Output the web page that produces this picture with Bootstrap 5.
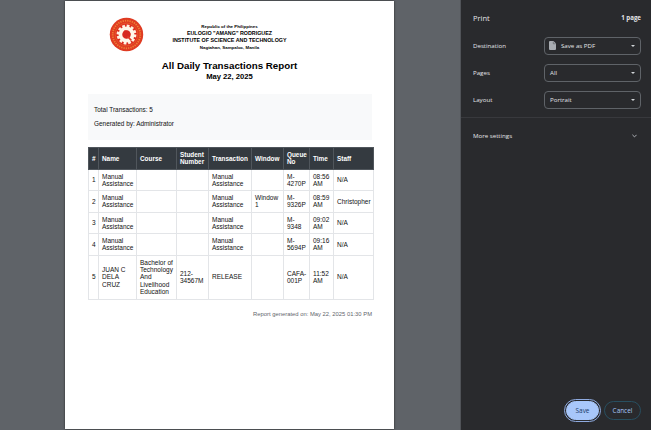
<!DOCTYPE html>
<html lang="en">
<head>
<meta charset="utf-8">
<title>Print</title>
<link href="https://cdn.jsdelivr.net/npm/bootstrap@5.3.0/dist/css/bootstrap.min.css" rel="stylesheet">
<style>
body{width:651px;height:430px;background:#292a2d;font-family:"Open Sans","Noto Sans",sans-serif}
.preview{width:461px;background:#5f6368;padding:1px 0 0 65px;border-right:1px solid #505358}
.sheet{width:329px;height:428px;background:#fff;color:#111;padding:22px 21px 0 23px;font-family:"Liberation Sans",Arial,sans-serif;box-shadow:0 0 2px #222}
.letterhead{height:28px;color:#000;padding-right:2px}
.seal{position:absolute;left:21px;top:-6px;width:35px;height:35px}
.h-sm{font-size:4.4px;line-height:7px}
.h-md{font-size:5.37px;line-height:7px}
.title{font-size:9.75px;line-height:12px;margin-top:9px;color:#000;padding-right:2px}
.date{font-size:7.65px;line-height:10px;color:#000;padding-right:2px}
.summary{height:46px;margin-top:12px;padding:9px 6px;background:#f8f9fa;font-size:6.43px;line-height:14px;width:284px}
.report{width:285px;table-layout:fixed;border-collapse:collapse;margin-top:7px;font-size:6.5px;line-height:7.2px}
.report th,.report td{border:1px solid #e3e5e8;padding:0 0 0 3px;vertical-align:middle;height:21.5px}
.report th{background:#343a40;font-size:6.4px;color:#fff;border-color:#50565c}
.report tr.tall td{height:44px}
.stamp{font-size:5.85px;line-height:8px;margin-top:10px;color:#5f666d;padding-right:1px}
.panel{width:190px;color:#e3e5e8;font-size:6.15px;line-height:10px;padding:13px 10px 0 12px}
.panel-title{font-size:7.5px}
.settings{padding-top:9px}
.setting{height:27px}
.picker{width:97px;height:18px;border:1px solid #5f6368;border-radius:4px;padding:0 5px}
.doc{margin:0 5px 0 -1px}
.caret{width:0;height:0;border:2px solid transparent;border-top-color:#d0d3d7;border-bottom:0}
.rule{height:1px;background:#38393d;margin:4px -10px 0 -12px}
.more{padding-top:13px}
.actions{padding-bottom:10px}
.pill{height:19px;border-radius:10px;font-size:6.4px;line-height:10px;padding:0}
.pill-save,.pill-save:hover{width:33px;margin-right:5px;background:#a8c7fa;color:#173968;border:1px solid #a8c7fa;outline:1px solid #8fabe0;outline-offset:1px}
.pill-cancel,.pill-cancel:hover{width:37px;color:#a8c7fa;border:1px solid #284f60}
</style>
</head>
<body class="d-flex overflow-hidden m-0">
<main class="preview flex-shrink-0">
 <div class="sheet">
  <header class="letterhead position-relative text-center fw-bold">
   <svg class="seal" viewBox="0 0 36 36">
    <circle cx="18" cy="18" r="17.2" fill="#df3b22"/>
    <circle cx="18" cy="18" r="14.2" fill="none" stroke="#ee8034" stroke-width="1.8" stroke-dasharray="1.3 1.1"/>
    <circle cx="18" cy="18" r="11.6" fill="#dc2d1f" stroke="#ee6f2d" stroke-width=".6"/>
    <circle cx="18" cy="18" r="8.8" fill="none" stroke="#fff3df" stroke-width="2.8" stroke-dasharray="2.8 1.8"/>
    <circle cx="18" cy="18" r="6.3" fill="#dc2d1f" stroke="#fff8ea" stroke-width="3.8"/>
    <path d="M16 13.7l4.5.6 1.5 3-1 4-3 .6-3-2.4-.5-3.5z" fill="#d6291f"/>
    <path d="M19 20l4 4" stroke="#df3b22" stroke-width="1.6"/>
   </svg>
   <div class="h-sm">Republic of the Philippines</div>
   <div class="h-md">EULOGIO "AMANG" RODRIGUEZ</div>
   <div class="h-md">INSTITUTE OF SCIENCE AND TECHNOLOGY</div>
   <div class="h-sm">Nagtahan, Sampaloc, Manila</div>
  </header>
  <div class="title text-center fw-bold">All Daily Transactions Report</div>
  <div class="date text-center fw-bold">May 22, 2025</div>
  <section class="summary"><div>Total Transactions: 5</div><div>Generated by: Administrator</div></section>
  <table class="report">
   <colgroup><col style="width:10px"><col style="width:38px"><col style="width:40px"><col style="width:32px"><col style="width:43px"><col style="width:32px"><col style="width:26px"><col style="width:24px"><col style="width:40px"></colgroup>
   <thead><tr><th>#</th><th>Name</th><th>Course</th><th>Student Number</th><th>Transaction</th><th>Window</th><th>Queue No</th><th>Time</th><th>Staff</th></tr></thead>
   <tbody>
    <tr><td>1</td><td>Manual Assistance</td><td></td><td></td><td>Manual Assistance</td><td></td><td>M-<br>4270P</td><td>08:56 AM</td><td>N/A</td></tr>
    <tr><td>2</td><td>Manual Assistance</td><td></td><td></td><td>Manual Assistance</td><td>Window<br>1</td><td>M-<br>9326P</td><td>08:59 AM</td><td>Christopher</td></tr>
    <tr><td>3</td><td>Manual Assistance</td><td></td><td></td><td>Manual Assistance</td><td></td><td>M-<br>9348</td><td>09:02 AM</td><td>N/A</td></tr>
    <tr><td>4</td><td>Manual Assistance</td><td></td><td></td><td>Manual Assistance</td><td></td><td>M-<br>5694P</td><td>09:16 AM</td><td>N/A</td></tr>
    <tr class="tall"><td>5</td><td>JUAN C<br>DELA<br>CRUZ</td><td>Bachelor of<br>Technology<br>And<br>Livelihood<br>Education</td><td>212-<br>34567M</td><td>RELEASE</td><td></td><td>CAFA-<br>001P</td><td>11:52 AM</td><td>N/A</td></tr>
   </tbody>
  </table>
  <div class="stamp text-end text-nowrap">Report generated on: May 22, 2025 01:30 PM</div>
 </div>
</main>
<aside class="panel d-flex flex-column flex-shrink-0">
 <div class="d-flex justify-content-between align-items-center"><span class="panel-title">Print</span><span class="fw-bold">1 page</span></div>
 <div class="settings">
  <div class="setting d-flex justify-content-between align-items-center"><span>Destination</span>
   <div class="picker d-flex align-items-center"><svg class="doc" width="7" height="9" viewBox="0 0 7 9"><path d="M1 0h3.5L7 2.5V8a1 1 0 0 1-1 1H1a1 1 0 0 1-1-1V1a1 1 0 0 1 1-1z" fill="#a9adb2"/><path d="M4.3.6v2.2h2.2" fill="none" stroke="#55585c" stroke-width=".6"/></svg><span class="me-auto">Save as PDF</span><span class="caret"></span></div></div>
  <div class="setting d-flex justify-content-between align-items-center"><span>Pages</span>
   <div class="picker d-flex align-items-center justify-content-between"><span>All</span><span class="caret"></span></div></div>
  <div class="setting d-flex justify-content-between align-items-center"><span>Layout</span>
   <div class="picker d-flex align-items-center justify-content-between"><span>Portrait</span><span class="caret"></span></div></div>
 </div>
 <div class="rule"></div>
 <div class="more d-flex justify-content-between align-items-center"><span>More settings</span><svg class="me-1" width="5" height="4" viewBox="0 0 5 4"><path d="M.4.8l2.1 2.1L4.6.8" fill="none" stroke="#bdc1c6" stroke-width=".9"/></svg></div>
 <div class="actions d-flex justify-content-end mt-auto"><button class="btn pill pill-save">Save</button><button class="btn pill pill-cancel">Cancel</button></div>
</aside>
</body>
</html>
